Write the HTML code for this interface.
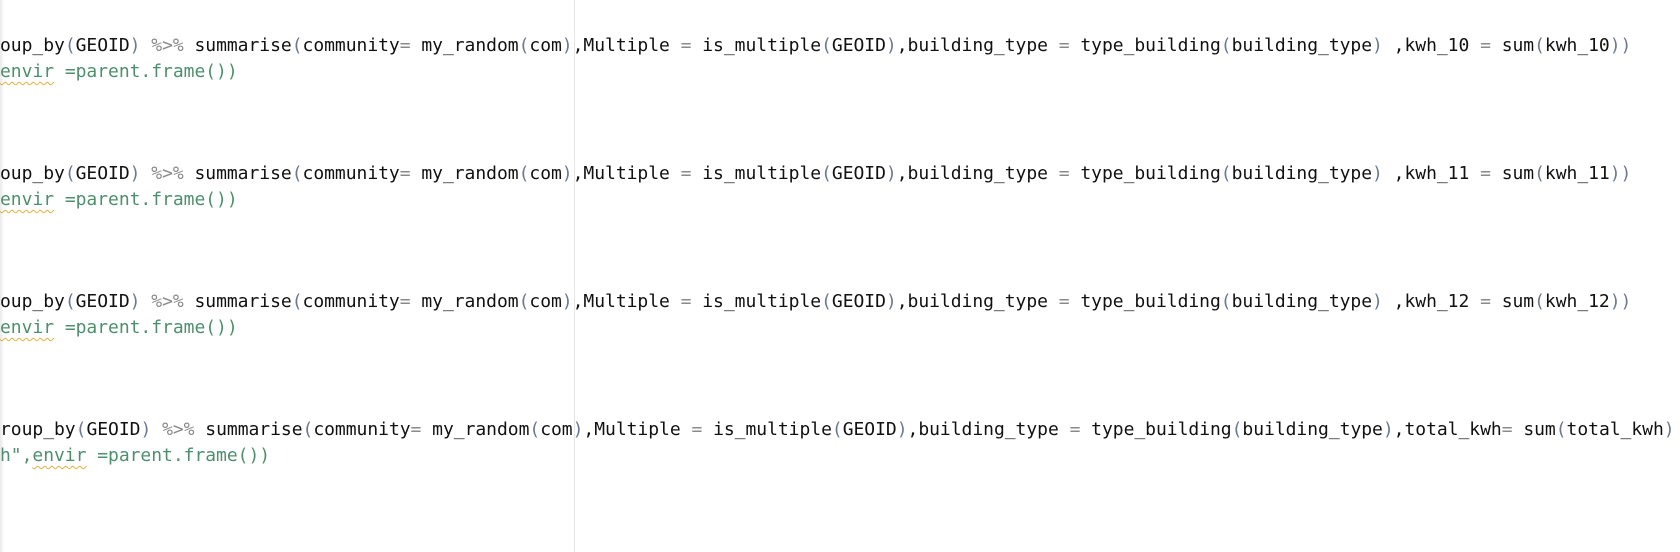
<!DOCTYPE html>
<html><head><meta charset="utf-8"><style>
html,body{margin:0;padding:0;width:1680px;height:552px;background:#fff;overflow:hidden;position:relative}
.l{position:absolute;left:0;white-space:pre;font-family:"DejaVu Sans Mono","Liberation Mono",monospace;font-size:18px;line-height:26px;color:#111;letter-spacing:-0.035px}
.p{color:#6b7a90}.o{color:#8a8a8a}.g{color:#4e8f6e}
.sq{text-decoration:underline wavy #e0b040;text-decoration-thickness:1px;text-underline-offset:4px}
.vl{position:absolute;left:574px;top:0;width:1px;height:552px;background:#e4e4e4}
.sh{position:absolute;left:0;top:0;width:4px;height:552px;background:linear-gradient(to right,#e8e8e8,#fff)}
</style></head><body>
<div class="sh"></div>
<div class="vl"></div>
<div class="l" style="top:33px">oup_by<span class="p">(</span>GEOID<span class="p">)</span> <span class="o">%&gt;%</span> summarise<span class="p">(</span>community<span class="o">=</span> my_random<span class="p">(</span>com<span class="p">)</span>,Multiple <span class="o">=</span> is_multiple<span class="p">(</span>GEOID<span class="p">)</span>,building_type <span class="o">=</span> type_building<span class="p">(</span>building_type<span class="p">)</span> ,kwh_10 <span class="o">=</span> sum<span class="p">(</span>kwh_10<span class="p">))</span></div>
<div class="l g" style="top:59px"><span class="sq">envir</span> =parent.frame())</div>
<div class="l" style="top:161px">oup_by<span class="p">(</span>GEOID<span class="p">)</span> <span class="o">%&gt;%</span> summarise<span class="p">(</span>community<span class="o">=</span> my_random<span class="p">(</span>com<span class="p">)</span>,Multiple <span class="o">=</span> is_multiple<span class="p">(</span>GEOID<span class="p">)</span>,building_type <span class="o">=</span> type_building<span class="p">(</span>building_type<span class="p">)</span> ,kwh_11 <span class="o">=</span> sum<span class="p">(</span>kwh_11<span class="p">))</span></div>
<div class="l g" style="top:187px"><span class="sq">envir</span> =parent.frame())</div>
<div class="l" style="top:289px">oup_by<span class="p">(</span>GEOID<span class="p">)</span> <span class="o">%&gt;%</span> summarise<span class="p">(</span>community<span class="o">=</span> my_random<span class="p">(</span>com<span class="p">)</span>,Multiple <span class="o">=</span> is_multiple<span class="p">(</span>GEOID<span class="p">)</span>,building_type <span class="o">=</span> type_building<span class="p">(</span>building_type<span class="p">)</span> ,kwh_12 <span class="o">=</span> sum<span class="p">(</span>kwh_12<span class="p">))</span></div>
<div class="l g" style="top:315px"><span class="sq">envir</span> =parent.frame())</div>
<div class="l" style="top:417px">roup_by<span class="p">(</span>GEOID<span class="p">)</span> <span class="o">%&gt;%</span> summarise<span class="p">(</span>community<span class="o">=</span> my_random<span class="p">(</span>com<span class="p">)</span>,Multiple <span class="o">=</span> is_multiple<span class="p">(</span>GEOID<span class="p">)</span>,building_type <span class="o">=</span> type_building<span class="p">(</span>building_type<span class="p">)</span>,total_kwh<span class="o">=</span> sum<span class="p">(</span>total_kwh<span class="p">)</span></div>
<div class="l g" style="top:443px">h",<span class="sq">envir</span> =parent.frame())</div>
</body></html>
